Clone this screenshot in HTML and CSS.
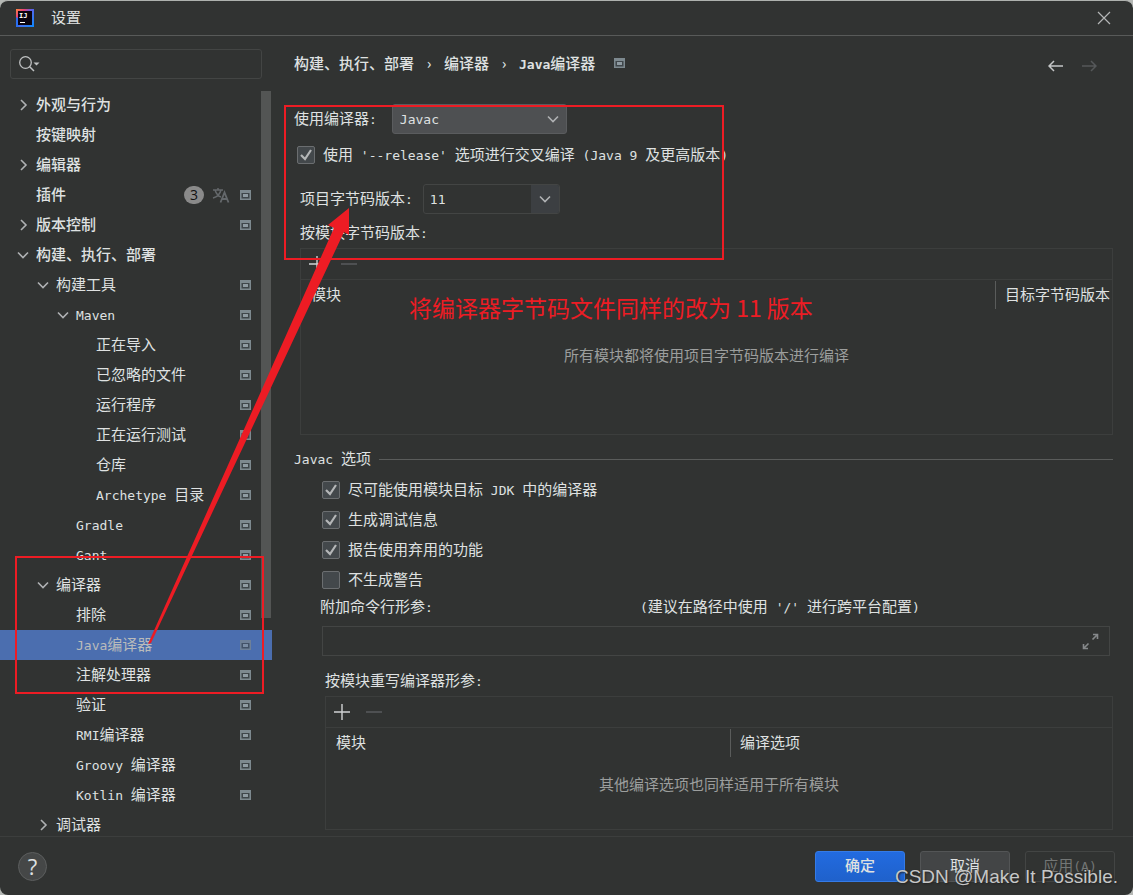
FILE: index.html
```html
<!DOCTYPE html>
<html lang="zh-CN">
<head>
<meta charset="utf-8">
<title>设置</title>
<link rel="stylesheet" href="styles.css">
</head>
<body>
<svg class="defs" aria-hidden="true">
  <symbol id="proj" viewBox="0 0 11 10"><path d="M0 0h11v10H0z" fill="#7d898f"/><path d="M1.500 3h8v5.500h-8z" fill="#3f464a"/><path d="M3 4h5v3H3z" fill="#8f9ba2"/></symbol>
  <symbol id="right" viewBox="0 0 12 12"><path d="M4 1l5 5-5 5" fill="none" stroke="#afb1b3" stroke-width="1.6"/></symbol>
  <symbol id="down" viewBox="0 0 12 12"><path d="M1 3.5l5 5 5-5" fill="none" stroke="#afb1b3" stroke-width="1.6"/></symbol>
  <symbol id="plus" viewBox="0 0 18 18"><path d="M9 1v16M1 9h16" fill="none" stroke="#d0d2d3" stroke-width="1.4"/></symbol>
  <symbol id="minus" viewBox="0 0 18 18"><path d="M1 9h16" fill="none" stroke="#5c5e60" stroke-width="1.4"/></symbol>
</svg>
<div class="dialog">
  <header class="titlebar">
    <svg class="logo" viewBox="0 0 18 18" aria-hidden="true">
      <defs><linearGradient id="lg" x1="0" y1="0" x2="1" y2="1"><stop offset="0" stop-color="#fe8a3c"/><stop offset=".25" stop-color="#e8407a"/><stop offset=".45" stop-color="#5a63e8"/><stop offset="1" stop-color="#0a8bff"/></linearGradient></defs>
      <path d="M0 0h18v18H0z" fill="url(#lg)"/><path d="M0 8l3 2v8H0z" fill="#2b6ff0"/><path d="M2 2h14v14H2z" fill="#0b0410"/>
      <text x="3" y="9" class="logo-text">IJ</text><path d="M4 13h5v1H4z" fill="#fff"/>
    </svg>
    <h1 class="title">设置</h1>
    <button class="icon-btn close" aria-label="关闭"><svg width="14" height="14" viewBox="0 0 14 14"><path d="M1 1l12 12M13 1L1 13" stroke="#b4b6b6" stroke-width="1.2"/></svg></button>
  </header>

  <div class="content">
    <aside class="sidebar">
      <label class="search">
        <svg width="21" height="16" viewBox="0 0 21 16" aria-hidden="true"><circle cx="6.500" cy="6.500" r="5.800" fill="none" stroke="#bfc1c2" stroke-width="1.3"/><path d="M10.500 10.500l4.500 4.500" stroke="#bfc1c2" stroke-width="1.500"/><path d="M14.500 6.500h6l-3 3z" fill="#bfc1c2"/></svg>
        <input type="search" aria-label="搜索">
      </label>
      <nav class="tree">
        <a href="#" class="row l1"><svg class="chev"><use href="#right"/></svg><span class="name">外观与行为</span></a>
        <a href="#" class="row l1"><i class="chev"></i><span class="name">按键映射</span></a>
        <a href="#" class="row l1"><svg class="chev"><use href="#right"/></svg><span class="name">编辑器</span></a>
        <a href="#" class="row l1"><i class="chev"></i><span class="name">插件</span><span class="badge">3</span><svg class="lang" viewBox="0 0 18 16"><path d="M1 3h10M6 1v2M9 3c-1 4-4 7-8 8M3 3c1 3 3 6 6 7" fill="none" stroke="#64686b" stroke-width="1.500"/><path d="M8.500 15.500l4-10 4 10M10 12h5" fill="none" stroke="#64686b" stroke-width="1.800"/></svg><svg class="proj"><use href="#proj"/></svg></a>
        <a href="#" class="row l1"><svg class="chev"><use href="#right"/></svg><span class="name">版本控制</span><svg class="proj"><use href="#proj"/></svg></a>
        <a href="#" class="row l1"><svg class="chev"><use href="#down"/></svg><span class="name">构建、执行、部署</span></a>
        <a href="#" class="row l2"><svg class="chev"><use href="#down"/></svg><span class="name">构建工具</span><svg class="proj"><use href="#proj"/></svg></a>
        <a href="#" class="row l3"><svg class="chev"><use href="#down"/></svg><span class="name"><span class="lat">Maven</span></span><svg class="proj"><use href="#proj"/></svg></a>
        <a href="#" class="row l4"><i class="chev"></i><span class="name">正在导入</span><svg class="proj"><use href="#proj"/></svg></a>
        <a href="#" class="row l4"><i class="chev"></i><span class="name">已忽略的文件</span><svg class="proj"><use href="#proj"/></svg></a>
        <a href="#" class="row l4"><i class="chev"></i><span class="name">运行程序</span><svg class="proj"><use href="#proj"/></svg></a>
        <a href="#" class="row l4"><i class="chev"></i><span class="name">正在运行测试</span><svg class="proj"><use href="#proj"/></svg></a>
        <a href="#" class="row l4"><i class="chev"></i><span class="name">仓库</span><svg class="proj"><use href="#proj"/></svg></a>
        <a href="#" class="row l4"><i class="chev"></i><span class="name"><span class="lat">Archetype </span>目录</span><svg class="proj"><use href="#proj"/></svg></a>
        <a href="#" class="row l3"><i class="chev"></i><span class="name"><span class="lat">Gradle</span></span><svg class="proj"><use href="#proj"/></svg></a>
        <a href="#" class="row l3"><i class="chev"></i><span class="name"><span class="lat">Gant</span></span><svg class="proj"><use href="#proj"/></svg></a>
        <a href="#" class="row l2"><svg class="chev"><use href="#down"/></svg><span class="name">编译器</span><svg class="proj"><use href="#proj"/></svg></a>
        <a href="#" class="row l3"><i class="chev"></i><span class="name">排除</span><svg class="proj"><use href="#proj"/></svg></a>
        <a href="#" class="row l3 selected" aria-current="page"><i class="chev"></i><span class="name"><span class="lat">Java</span>编译器</span><svg class="proj"><use href="#proj"/></svg></a>
        <a href="#" class="row l3"><i class="chev"></i><span class="name">注解处理器</span><svg class="proj"><use href="#proj"/></svg></a>
        <a href="#" class="row l3"><i class="chev"></i><span class="name">验证</span><svg class="proj"><use href="#proj"/></svg></a>
        <a href="#" class="row l3"><i class="chev"></i><span class="name"><span class="lat">RMI</span>编译器</span><svg class="proj"><use href="#proj"/></svg></a>
        <a href="#" class="row l3"><i class="chev"></i><span class="name"><span class="lat">Groovy </span>编译器</span><svg class="proj"><use href="#proj"/></svg></a>
        <a href="#" class="row l3"><i class="chev"></i><span class="name"><span class="lat">Kotlin </span>编译器</span><svg class="proj"><use href="#proj"/></svg></a>
        <a href="#" class="row l2"><svg class="chev"><use href="#right"/></svg><span class="name">调试器</span></a>
        <div class="thumb"></div>
      </nav>
    </aside>

    <main class="main">
      <div class="head">
        <nav class="crumbs"><a href="#">构建、执行、部署</a><span class="sep">›</span><a href="#">编译器</a><span class="sep">›</span><a href="#"><span class="lat">Java</span>编译器</a><svg class="proj"><use href="#proj"/></svg></nav>
        <div class="history">
          <button class="icon-btn" aria-label="后退"><svg width="16" height="12" viewBox="0 0 16 12"><path d="M15 6H1M6 1L1 6l5 5" fill="none" stroke="#c4c6c7" stroke-width="1.500"/></svg></button>
          <button class="icon-btn" aria-label="前进" disabled><svg width="16" height="12" viewBox="0 0 16 12"><path d="M1 6h14M10 1l5 5-5 5" fill="none" stroke="#55585a" stroke-width="1.500"/></svg></button>
        </div>
      </div>

      <div class="field">
        <label for="compiler">使用编译器<span class="lat">:</span></label>
        <span class="select"><select id="compiler"><option>Javac</option></select><svg><use href="#down"/></svg></span>
      </div>
      <label class="check release"><input type="checkbox" checked><span>使用<span class="lat"> '--release' </span>选项进行交叉编译<span class="lat"> (Java 9 </span>及更高版本<span class="lat">)</span></span></label>

      <section class="group">
        <div class="field">
          <label for="version">项目字节码版本<span class="lat">:</span></label>
          <span class="combo"><input id="version" type="text" value="11"><button aria-label="选择版本"><svg><use href="#down"/></svg></button></span>
        </div>
        <h2 class="caption">按模块字节码版本<span class="lat">:</span></h2>
        <div class="panel tall">
          <div class="toolbar"><button class="icon-btn" aria-label="添加"><svg class="tool"><use href="#plus"/></svg></button><button class="icon-btn" aria-label="移除" disabled><svg class="tool"><use href="#minus"/></svg></button></div>
          <table>
            <thead><tr><th>模块</th><th class="target">目标字节码版本</th></tr></thead>
            <tbody><tr><td colspan="2">所有模块都将使用项目字节码版本进行编译</td></tr></tbody>
          </table>
        </div>
      </section>

      <h2 class="divider"><span><span class="lat">Javac </span>选项</span></h2>
      <section class="options">
        <label class="check"><input type="checkbox" checked><span>尽可能使用模块目标<span class="lat"> JDK </span>中的编译器</span></label>
        <label class="check"><input type="checkbox" checked><span>生成调试信息</span></label>
        <label class="check"><input type="checkbox" checked><span>报告使用弃用的功能</span></label>
        <label class="check"><input type="checkbox"><span>不生成警告</span></label>
        <div class="args-label">
          <label for="args">附加命令行形参<span class="lat">:</span></label>
          <span><span class="lat">(</span>建议在路径中使用<span class="lat"> '/' </span>进行跨平台配置<span class="lat">)</span></span>
        </div>
        <div class="args"><input id="args" type="text"><button class="icon-btn" aria-label="展开"><svg width="17" height="17" viewBox="0 0 17 17"><path d="M11 1.500h4.500V6M15.500 1.500l-5 5M1.500 11v4.500H6M1.500 15.500l5-5" fill="none" stroke="#85888a" stroke-width="1.600"/></svg></button></div>
        <div class="override">
          <h2 class="caption">按模块重写编译器形参<span class="lat">:</span></h2>
          <div class="panel">
            <div class="toolbar"><button class="icon-btn" aria-label="添加"><svg class="tool"><use href="#plus"/></svg></button><button class="icon-btn" aria-label="移除" disabled><svg class="tool"><use href="#minus"/></svg></button></div>
            <table>
              <thead><tr><th>模块</th><th class="opts">编译选项</th></tr></thead>
              <tbody><tr><td colspan="2">其他编译选项也同样适用于所有模块</td></tr></tbody>
            </table>
          </div>
        </div>
      </section>
    </main>
  </div>

  <footer class="footer">
    <button class="help" aria-label="帮助">?</button>
    <button class="btn primary">确定</button>
    <button class="btn">取消</button>
    <button class="btn" disabled>应用<span class="lat">(A)</span></button>
  </footer>

  <svg class="markup" aria-hidden="true">
    <g fill="none" stroke="#ed1c24" stroke-width="2"><rect x="285" y="106" width="438" height="153"/><rect x="16" y="557" width="247" height="136"/></g>
    <path d="M148 644L334 228L328 225L349 208V235L344 232L151 643z" fill="#ed1c24"/>
  </svg>
  <p class="note">将编译器字节码文件同样的改为 11 版本</p>
  <p class="watermark">CSDN @Make It Possible.</p>
</div>
</body>
</html>
```
FILE: styles.css
```css
* { box-sizing: border-box; }
body {
  margin: 0;
  background: #b5b8b5;
  color: #dfe1e1;
  font: 15px/20px "Noto Sans CJK SC", sans-serif;
}
h1, h2, p { margin: 0; font: inherit; }
a { color: inherit; text-decoration: none; }
button, input, select { font: inherit; color: inherit; }
.defs { position: absolute; width: 0; height: 0; }
.lat { font-family: "DejaVu Sans Mono", monospace; font-size: 13px; line-height: 1; white-space: pre; }

.dialog {
  position: relative;
  display: flex;
  flex-direction: column;
  height: 100vh;
  border-top: 1px solid #aeb1ae;
  border-radius: 8px;
  background: #313332;
  overflow: hidden;
}
.titlebar {
  display: flex;
  align-items: center;
  flex: none;
  height: 35px;
  padding: 0 22px 0 16px;
  border-bottom: 1px solid #585a59;
}
.logo { width: 18px; height: 18px; margin-right: 17px; }
.logo-text { font: bold 7px "DejaVu Sans Mono", monospace; fill: #fff; }
.title { flex: 1; padding-bottom: 2px; }
.icon-btn { display: inline-flex; padding: 0; border: 0; background: none; }

.content { display: flex; flex: 1; min-height: 0; }
.sidebar { display: flex; flex-direction: column; flex: none; width: 272px; }
.search {
  display: flex;
  align-items: center;
  flex: none;
  height: 30px;
  margin: 13px 10px 11px;
  padding-left: 8px;
  border: 1px solid #434544;
  border-radius: 3px;
}
.search input { flex: 1; min-width: 0; border: 0; background: none; outline: 0; }
.tree { position: relative; flex: 1; min-height: 0; overflow: hidden; }
.row {
  display: flex;
  align-items: center;
  height: 30px;
  padding-right: 21px;
}
.l1 { padding-left: 17px; font-weight: 500; }
.l2 { padding-left: 37px; }
.l3 { padding-left: 57px; }
.l4 { padding-left: 77px; }
.chev { flex: none; width: 12px; height: 12px; margin-right: 7px; }
.name { flex: 1; white-space: nowrap; padding-bottom: 3px; }
.proj { flex: none; width: 11px; height: 10px; }
.badge {
  width: 20px;
  height: 18px;
  border-radius: 9px;
  background: #8a8a8a;
  color: #111;
  font: 14px/18px "Open Sans", sans-serif;
  text-align: center;
}
.lang { width: 18px; height: 16px; margin: 0 10px 0 8px; }
.selected { background: #4b6eaf; color: #b9bbbb; }
.selected .proj { opacity: 0.7; }
.thumb {
  position: absolute;
  top: 1px;
  right: 1px;
  width: 10px;
  height: 527px;
  background: #535554;
}

.main { flex: 1; min-width: 0; padding: 0 20px 0 22px; overflow: hidden; }
.head { display: flex; justify-content: space-between; height: 68px; padding: 17px 16px 0 0; }
.crumbs { display: flex; align-items: center; height: 20px; font-weight: 500; }
.crumbs .lat { font-weight: bold; }
.sep { width: 30px; text-align: center; }
.crumbs .proj { margin-left: 19px; }
.history { display: flex; align-items: center; gap: 17px; height: 26px; }

.field { display: flex; align-items: center; height: 30px; }
.field label { padding-bottom: 2px; }
.select { position: relative; margin-left: 15px; width: 175px; height: 30px; }
.select select {
  appearance: none;
  width: 100%;
  height: 100%;
  padding: 0 7px;
  border: 1px solid #5a5c5e;
  border-radius: 3px;
  background: #4e5052;
  font: 13px "DejaVu Sans Mono", monospace;
}
.select svg { position: absolute; right: 8px; top: 9px; width: 12px; height: 12px; pointer-events: none; }
.check { display: flex; align-items: center; height: 30px; gap: 8px; }
.check > span { padding-bottom: 2px; white-space: nowrap; }
.check input {
  appearance: none;
  width: 18px;
  height: 18px;
  margin: 0;
  border: 1px solid #6b6e70;
  border-radius: 2px;
  background: #43484b;
}
.check input:checked {
  background: #43484b url("data:image/svg+xml,%3Csvg xmlns='http://www.w3.org/2000/svg' viewBox='0 0 16 16'%3E%3Cpath d='M3 8l4 4 6-9' fill='none' stroke='%23b4b6b7' stroke-width='2.2'/%3E%3C/svg%3E");
}
.release { margin: 6px 0 14px 3px; }

.group { padding-left: 6px; }
.combo {
  display: flex;
  width: 137px;
  height: 30px;
  margin-left: 10px;
  border: 1px solid #434544;
  border-radius: 3px;
  overflow: hidden;
}
.combo input {
  flex: 1;
  min-width: 0;
  padding: 0 6px;
  border: 0;
  background: none;
  font: 13px "DejaVu Sans Mono", monospace;
}
.combo button { display: grid; place-items: center; width: 28px; padding: 0; border: 0; background: #3c3f42; }
.combo svg { width: 12px; height: 12px; }
.caption { padding: 8px 0 6px; height: 34px; }
.panel { display: flex; flex-direction: column; height: 134px; border: 1px solid #3c3e3d; }
.tall { height: 187px; }
.toolbar { display: flex; align-items: center; flex: none; gap: 14px; height: 31px; padding-left: 7px; border-bottom: 1px solid #3c3e3d; }
.tool { width: 18px; height: 18px; }
table { width: 100%; border-collapse: collapse; table-layout: fixed; }
th { height: 31px; padding: 0 0 3px 10px; font-weight: 400; text-align: left; white-space: nowrap; background: linear-gradient(#5a5c5b, #5a5c5b) left 0 top 1px / 0 28px no-repeat; }
th + th { padding-left: 10px; background-size: 1px 28px; }
.target { width: 117px; }
.opts { width: 382px; }
td { height: 50px; padding: 0; color: #9c9e9d; text-align: center; }
.tall td { height: 88px; }

.divider { display: flex; align-items: center; gap: 8px; margin-top: 13px; height: 20px; }
.divider::after { content: ""; flex: 1; height: 1px; background: #5a5c5b; margin-top: 2px; }
.options { padding: 7px 0 0 28px; }
.args-label { display: grid; grid-template-columns: 320px 1fr; margin-left: -2px; height: 31px; padding-top: 1px; }
.args { display: flex; align-items: center; height: 30px; margin-right: 3px; padding-right: 10px; border: 1px solid #434544; }
.args input { flex: 1; min-width: 0; border: 0; background: none; outline: 0; }
.override { padding: 6px 0 0 3px; }

.footer {
  display: flex;
  align-items: center;
  flex: none;
  gap: 15px;
  height: 59px;
  padding: 0 18px;
  border-top: 1px solid #3c3e3d;
}
.help {
  width: 29px;
  height: 29px;
  margin-right: auto;
  padding: 0;
  border: 1px solid #5c5e5e;
  border-radius: 50%;
  background: #454747;
  font: 22px/26px "Open Sans", sans-serif;
}
.btn {
  width: 90px;
  height: 31px;
  padding: 0 0 2px;
  border: 1px solid #535556;
  border-radius: 3px;
  background: #434546;
}
.primary { border-color: #357be6; background: linear-gradient(#226be0, #1f61cb); font-weight: 500; }
.btn:disabled { border-color: #434544; background: none; color: #737675; }

.markup { position: absolute; left: 0; top: -1px; width: 100%; height: 895px; pointer-events: none; }
.note { position: absolute; left: 409px; top: 291px; color: #ed1c24; font-size: 23px; line-height: 30px; white-space: nowrap; }
.watermark {
  position: absolute;
  right: 15px;
  bottom: 6px;
  color: #c6c7c7;
  font: 19px/24px "Liberation Sans", sans-serif;
  text-shadow: 1px 1px 2px #222;
}
```
